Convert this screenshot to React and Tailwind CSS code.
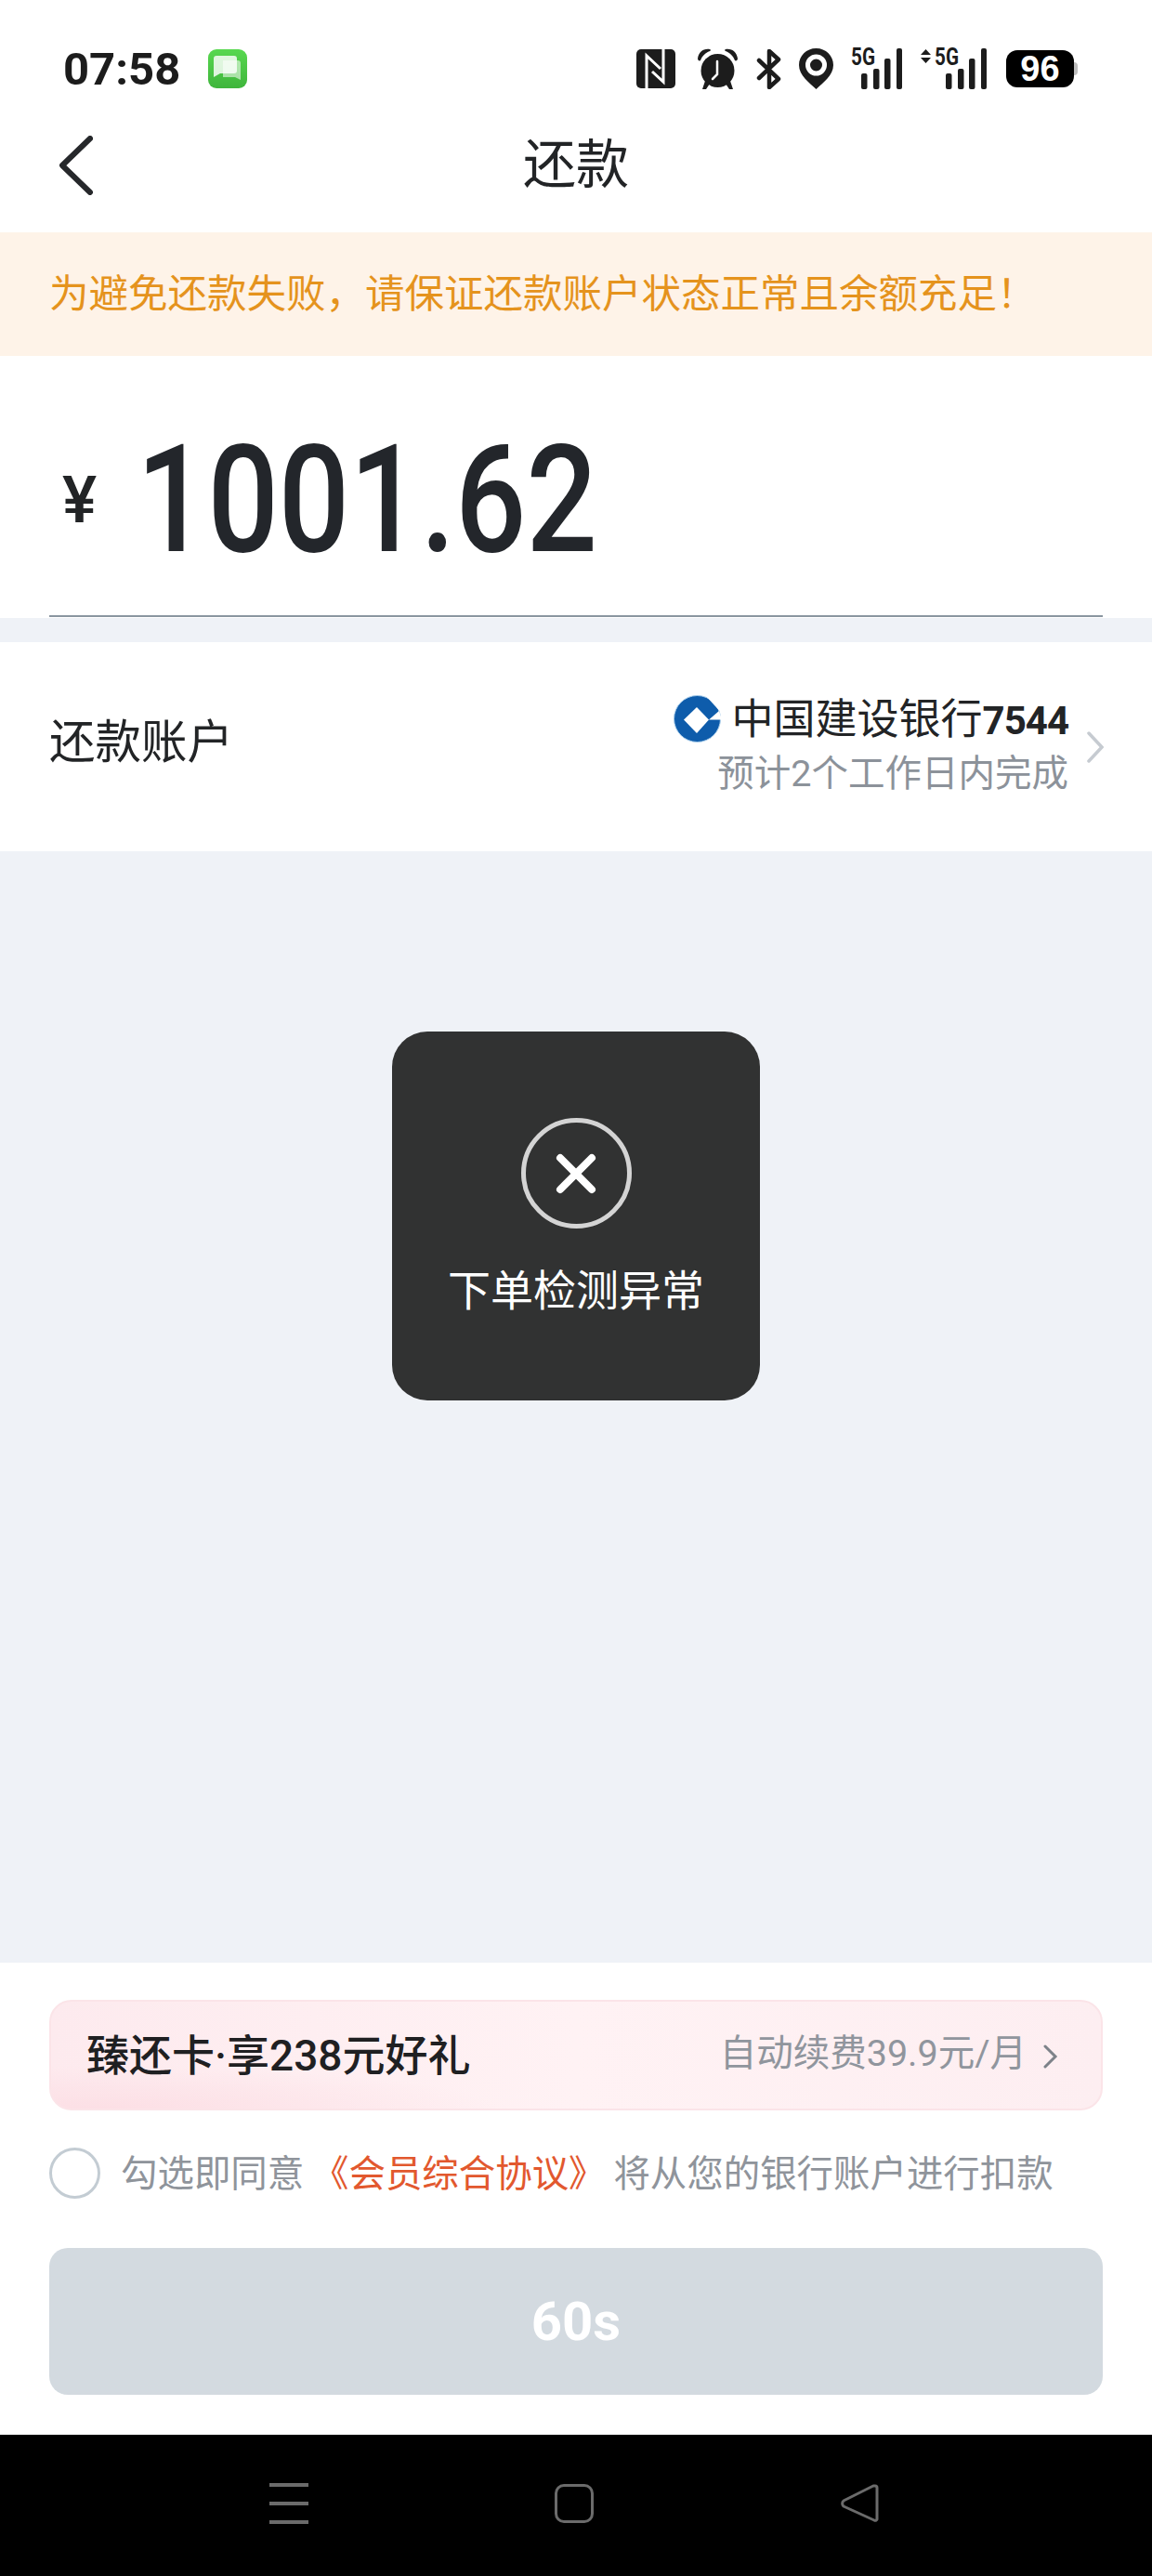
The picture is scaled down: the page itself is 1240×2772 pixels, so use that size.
function ChatBadge() {
  return (
    <svg width="42" height="42" viewBox="0 0 42 42">
      <defs>
        <linearGradient id="chat" x1="0" y1="0" x2="0" y2="1">
          <stop offset="0" stopColor="#58d84f" />
          <stop offset="1" stopColor="#3fb53c" />
        </linearGradient>
      </defs>
      <rect width="42" height="42" rx="9" fill="url(#chat)" />
      <path d="M16 12h16a3 3 0 0 1 3 3v18l-6-3H16z" fill="#fff" opacity="0.55" />
      <path d="M9 7h19a3 3 0 0 1 3 3v13a3 3 0 0 1-3 3H13l-7 4V10a3 3 0 0 1 3-3z" fill="#fff" opacity="0.82" />
    </svg>
  )
}

function NfcIcon() {
  return (
    <svg width="42" height="42" viewBox="0 0 42 42">
      <rect width="42" height="42" rx="5" fill="#1c1c1c" />
      <path d="M11 42V7l15 14" fill="none" stroke="#fff" strokeWidth="3" />
      <path d="M29 0v35L17 24" fill="none" stroke="#fff" strokeWidth="3" />
    </svg>
  )
}

function AlarmIcon() {
  return (
    <svg width="43" height="44" viewBox="0 0 43 44">
      <path d="M0 11C1 4 6 0 13 1c1 0 1 2 0 2C8 5 5 8 3 13c-1 1-3 0-3-2z" fill="#1c1c1c" />
      <path d="M43 11C42 4 37 0 30 1c-1 0-1 2 0 2 5 2 8 5 10 10 1 1 3 0 3-2z" fill="#1c1c1c" />
      <circle cx="21.500" cy="24" r="18" fill="#1c1c1c" />
      <path d="M8 35l-3 9h4l4-6zM35 35l3 9h-4l-4-6z" fill="#1c1c1c" />
      <path d="M21 14v14l-5 5" fill="none" stroke="#fff" strokeWidth="2.500" strokeLinecap="round" />
    </svg>
  )
}

function BluetoothIcon() {
  return (
    <svg width="27" height="43" viewBox="0 0 27 43">
      <path d="M3 12l21 20-10 9V2l10 9L3 31" fill="none" stroke="#1c1c1c" strokeWidth="4.500" strokeLinejoin="round" strokeLinecap="round" />
    </svg>
  )
}

function PinIcon() {
  return (
    <svg width="37" height="44" viewBox="0 0 37 44">
      <path d="M18.500 0C8 0 0 8 0 18c0 11 11 19 18.500 26C26 37 37 29 37 18 37 8 29 0 18.500 0z" fill="#1c1c1c" />
      <circle cx="18.500" cy="18" r="9" fill="none" stroke="#fff" strokeWidth="5" />
    </svg>
  )
}

function SignalIcon({ arrows }) {
  const w = arrows ? 71 : 55
  return (
    <svg width={w} height="52" viewBox={`0 -8 ${w} 52`} className="-mt-[8px]">
      {arrows && <path d="M0 7l5.500-6 5.500 6zM0 10l5.500 6 5.500-6z" fill="#1c1c1c" />}
      <text x={arrows ? 15 : 0} y="18" fontFamily="Roboto, sans-serif" fontWeight="700" fontSize="25" fill="#1c1c1c" textLength="26" lengthAdjust="spacingAndGlyphs">5G</text>
      <g fill="#1c1c1c">
        <rect x={arrows ? 27 : 11} y="27" width="6.500" height="17" rx="2" />
        <rect x={arrows ? 40 : 24} y="22" width="6.500" height="22" rx="2" />
        <rect x={arrows ? 52 : 36} y="11" width="6.500" height="33" rx="2" />
        <rect x={arrows ? 65 : 49} y="0" width="6" height="44" rx="2" />
      </g>
    </svg>
  )
}

function BankLogo() {
  return (
    <svg width="51" height="51" viewBox="0 0 51 51" className="shrink-0">
      <circle cx="25.500" cy="25.500" r="25" fill="#0e5cab" stroke="#a9cdea" strokeWidth="1" />
      <path d="M25 13l13 13.500L25 41 11 26.500z" fill="#fff" />
      <path d="M38 26.500L49 17l3 9.500z" fill="#fff" />
      <path d="M35 1l14.500 16L52 0z" fill="#fff" />
    </svg>
  )
}

function App() {
  return (
    <div className="flex flex-col w-full h-[2772px] bg-[#eff2f7] font-['Roboto','Noto_Sans_CJK_SC',sans-serif] text-[#222426]">

      {/* Status bar + title */}
      <div className="bg-white h-[250px] flex flex-col">
        <div className="flex items-center justify-between h-[44px] pt-[52px] box-content pl-[68px] pr-[80px] shrink-0">
          <div className="flex items-center gap-[30px]">
            <span className="font-['Roboto',sans-serif] font-bold text-[49px] leading-none text-[#1c1c1c] w-[126px]">07:58</span>
            <ChatBadge />
          </div>
          <div className="flex items-center">
            <NfcIcon />
            <div className="ml-[24px]"><AlarmIcon /></div>
            <div className="ml-[20px]"><BluetoothIcon /></div>
            <div className="ml-[19px]"><PinIcon /></div>
            <div className="ml-[19px]"><SignalIcon /></div>
            <div className="ml-[20px]"><SignalIcon arrows /></div>
            <div className="ml-[21px] flex items-center">
              <div className="w-[73px] h-[40px] rounded-[12px] bg-black text-white font-['Liberation_Sans',sans-serif] font-bold text-[38px] leading-[40px] text-center">96</div>
              <div className="w-[4px] h-[14px] bg-[#bdbdbd] rounded-r-sm"></div>
            </div>
          </div>
        </div>
        <div className="relative flex-1 flex items-center justify-center pb-[2px]">
          <svg width="36" height="64" viewBox="0 0 36 64" className="absolute left-[64px] top-[50px]">
            <path d="M33 3L3 32l30 29" fill="none" stroke="#26282b" strokeWidth="6" strokeLinecap="round" strokeLinejoin="round" />
          </svg>
          <span className="text-[57px] leading-none font-['Noto_Sans_CJK_SC',sans-serif]">还款</span>
        </div>
      </div>

      {/* Notice */}
      <div className="h-[133px] bg-[#fef3e8] flex items-center pl-[53px] pb-[6px] text-[#e5931d] text-[42.500px] leading-none font-['Noto_Sans_CJK_SC',sans-serif]">
        为避免还款失败，请保证还款账户状态正常且余额充足！
      </div>

      {/* Amount */}
      <div className="bg-white h-[282px] px-[53px]">
        <div className="h-[281px] border-b-2 border-[#8a96a0] flex items-center pl-[14px] pt-[30px]">
          <span className="font-medium text-[70px] leading-none w-[80px]">¥</span>
          <span className="font-medium text-[162px] leading-none text-[#23262b] scale-x-[0.83] origin-left">1001.62</span>
        </div>
      </div>

      {/* Account row */}
      <div className="bg-white h-[225px] mt-[26px] flex items-center justify-between pl-[53px] pr-[52px]">
        <span className="text-[49.500px] leading-none pb-[18px] font-['Noto_Sans_CJK_SC',sans-serif]">还款账户</span>
        <div className="flex items-center gap-[20px]">
          <div className="flex flex-col items-end gap-[10px] pb-[6px]">
            <div className="flex items-center gap-[12px]">
              <BankLogo />
              <span className="text-[45px] leading-[50px] font-['Noto_Sans_CJK_SC',sans-serif]">
                中国建设银行<span className="font-['Roboto',sans-serif] font-bold text-[42px] tracking-[-1px]">7544</span>
              </span>
            </div>
            <span className="text-[#8c929a] text-[39.500px] leading-[44px]">预计2个工作日内完成</span>
          </div>
          <svg width="18" height="34" viewBox="0 0 18 34">
            <path d="M2 2l14 15L2 32" fill="none" stroke="#c6cbd1" strokeWidth="3.500" strokeLinecap="round" />
          </svg>
        </div>
      </div>

      {/* Empty area with toast */}
      <div className="flex-1 flex justify-center items-start pt-[194px]">
        <div className="w-[396px] h-[397px] rounded-[38px] bg-[#313232] flex flex-col items-center pt-[93px]">
          <div className="w-[119px] h-[119px] rounded-full border-[5px] border-[#d4d4d4] flex items-center justify-center">
            <svg width="44" height="44" viewBox="0 0 44 44">
              <path d="M5 5l34 34M39 5L5 39" stroke="#fff" strokeWidth="8" strokeLinecap="round" />
            </svg>
          </div>
          <span className="mt-[33px] text-white text-[46px] leading-[60px] font-['Noto_Sans_CJK_SC',sans-serif]">下单检测异常</span>
        </div>
      </div>

      {/* Bottom panel */}
      <div className="bg-white h-[508px] px-[53px] pt-[40px] flex flex-col">
        <div className="h-[119px] rounded-[24px] border-2 border-[#fbe4e8] bg-[radial-gradient(ellipse_at_5%_100%,#fcdfe5,transparent_28%),linear-gradient(to_right,#fdeaee,#fff2f4_50%,#fdeef1)] flex items-center justify-between pl-[38px] pr-[46px]">
          <span className="text-[46px] leading-none font-medium text-[#1f2022]">臻还卡·享238元好礼</span>
          <div className="flex items-center gap-[18px] text-[#90959d] pb-[3px]">
            <span className="text-[39.500px] leading-none">自动续费39.9元/月</span>
            <svg width="16" height="26" viewBox="0 0 16 26" className="mt-[6px]">
              <path d="M2 2l11 11L2 24" fill="none" stroke="#7d8289" strokeWidth="3" strokeLinecap="round" />
            </svg>
          </div>
        </div>

        <div className="flex items-center mt-[39px] h-[56px]">
          <div className="w-[55px] h-[55px] rounded-full border-[3px] border-[#c3ccd3] shrink-0"></div>
          <p className="ml-[22px] pb-[5px] text-[39.450px] leading-none whitespace-nowrap text-[#8f949b] font-['Noto_Sans_CJK_SC',sans-serif]">
            勾选即同意 <span className="text-[#e2582e]">《会员综合协议》</span> 将从您的银行账户进行扣款
          </p>
        </div>

        <div className="mt-[53px] h-[158px] rounded-[20px] bg-[#d3dae0] flex items-center justify-center">
          <span className="text-white font-bold text-[58px] leading-none">60s</span>
        </div>
      </div>

      {/* Nav bar */}
      <div className="h-[152px] bg-black flex items-center justify-between pl-[290px] pr-[294px] pb-[4px]">
        <div className="flex flex-col gap-[16px] w-[42px]">
          <div className="h-[4px] bg-[#6b6b6b]"></div>
          <div className="h-[4px] bg-[#6b6b6b]"></div>
          <div className="h-[4px] bg-[#6b6b6b]"></div>
        </div>
        <div className="w-[42px] h-[42px] rounded-[10px] border-[3px] border-[#6b6b6b]"></div>
        <svg width="42" height="42" viewBox="0 0 42 42">
          <path d="M38 2a2 2 0 0 1 2 2v34a2 2 0 0 1-3 1L4 24a4 4 0 0 1 0-6L36 2z" fill="none" stroke="#6b6b6b" strokeWidth="3" strokeLinejoin="round" />
        </svg>
      </div>
    </div>
  )
}

export default App
